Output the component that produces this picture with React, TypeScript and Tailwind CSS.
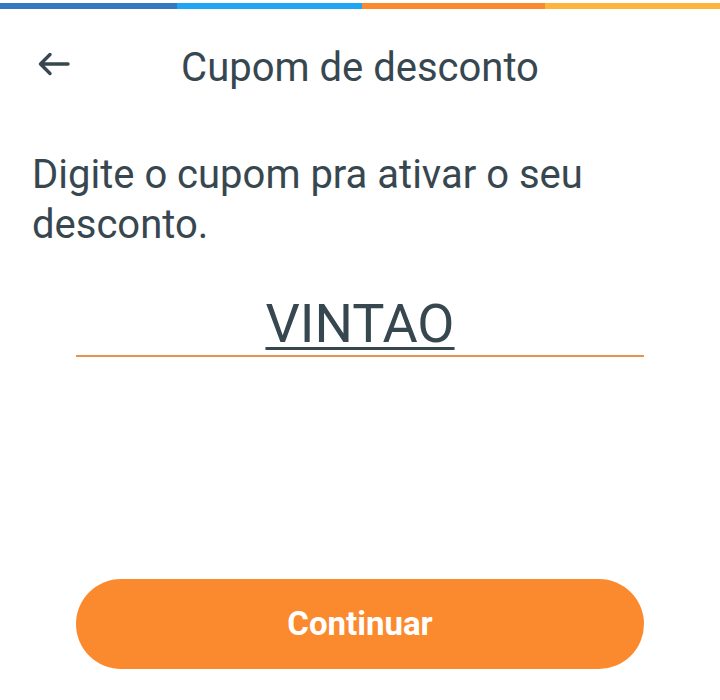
import React from 'react';

const FONT = { fontFamily: 'Roboto, "Noto Sans", sans-serif' };

function BackArrow() {
  return (
    <svg width="32" height="24" viewBox="0 0 32 24" fill="none" aria-hidden>
      <path
        d="M30 12H3M12 2.5L2.5 12L12 21.5"
        stroke="#37474f"
        strokeWidth="3.4"
        strokeLinecap="round"
        strokeLinejoin="round"
      />
    </svg>
  );
}

export default function App() {
  return (
    <div className="flex h-[700px] w-[720px] flex-col bg-white" style={FONT}>
      {/* progress stripe */}
      <div className="mt-[3px] flex h-[6px]">
        <div className="w-[177px] bg-[#3479c0]" />
        <div className="w-[185px] bg-[#1ea5f3]" />
        <div className="w-[183px] bg-[#fb8a2e]" />
        <div className="flex-1 bg-[#fdb43a]" />
      </div>

      <header className="relative pt-[35px] text-center">
        <button className="absolute left-[38px] top-[43px]">
          <BackArrow />
        </button>
        <h1 className="text-[40px] leading-[48px] font-normal text-[#37474f]">
          Cupom de desconto
        </h1>
      </header>

      <p className="mt-[58px] px-8 text-[40px] leading-[50px] text-[#37474f]">
        Digite o cupom pra ativar o seu
        <br />
        desconto.
      </p>

      <div className="mx-[76px] mt-[46px] flex justify-center border-b-2 border-[#e8934c] pb-[3px]">
        <span className="text-[54px] leading-[56px] text-[#37474f] underline decoration-[3px] underline-offset-[5px]">
          VINTAO
        </span>
      </div>

      <div className="mt-auto mb-[31px] px-[76px]">
        <button className="flex h-[90px] w-full items-center justify-center rounded-full bg-[#fb8a2e] text-[33px] font-bold text-white">
          Continuar
        </button>
      </div>
    </div>
  );
}
